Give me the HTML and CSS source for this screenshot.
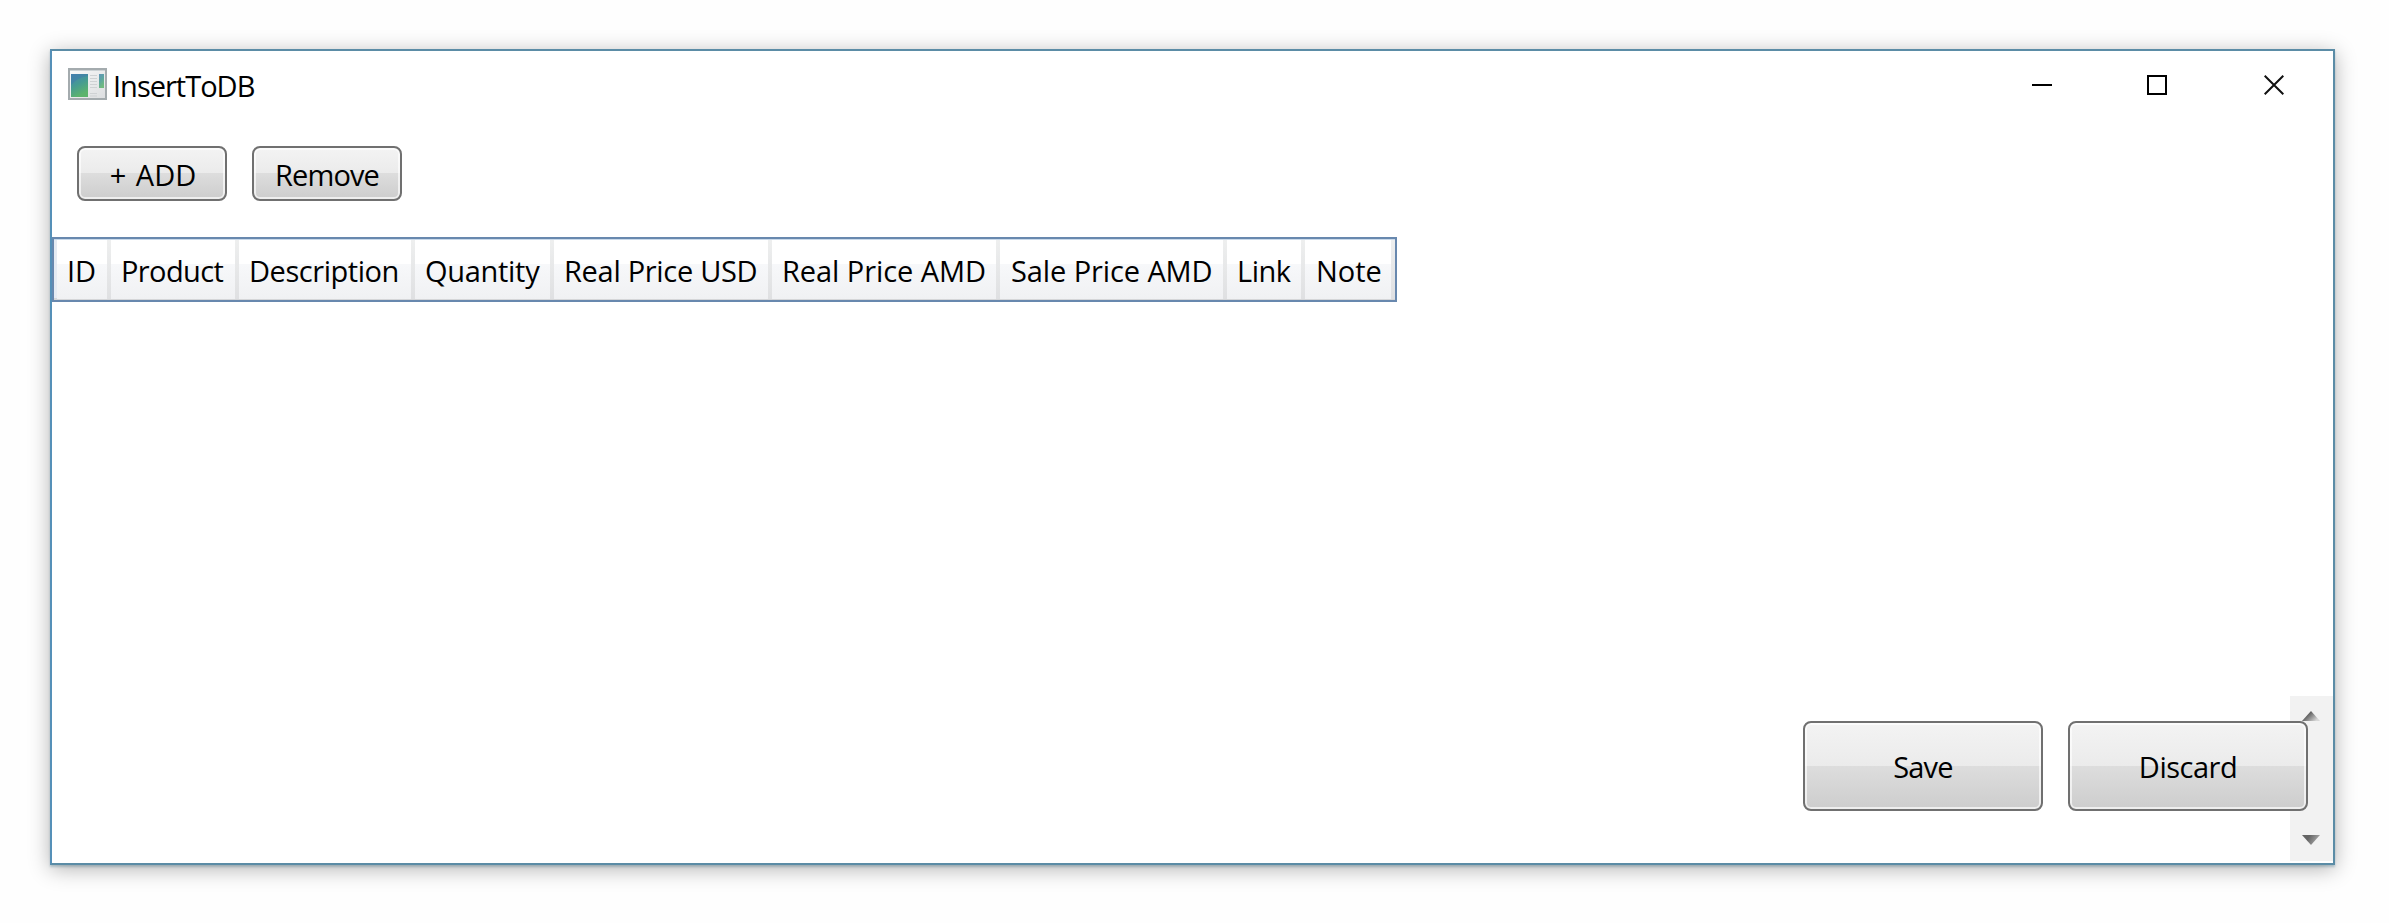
FILE: index.html
```html
<!DOCTYPE html>
<html lang="en">
<head>
<meta charset="utf-8">
<title>InsertToDB</title>
<link rel="stylesheet" href="styles.css">
</head>
<body>
<main class="window">
  <header class="titlebar">
    <svg class="app-icon" width="39" height="32" viewBox="0 0 39 32">
      <defs>
        <linearGradient id="pane" x1="0" y1="0" x2="0.4" y2="1"><stop offset="0" stop-color="#4a86b0"/><stop offset=".5" stop-color="#459a94"/><stop offset="1" stop-color="#5cb46c"/></linearGradient>
        <linearGradient id="frame" x1="0" y1="0" x2="1" y2="1"><stop offset="0" stop-color="#fafafa"/><stop offset="1" stop-color="#dcdee0"/></linearGradient>
      </defs>
      <rect x="1" y="1" width="37" height="30" fill="url(#frame)" stroke="#a4abae" stroke-width="2"/>
      <path d="M2 2.5H37" stroke="#ccd2d5"/>
      <rect x="3" y="6" width="17" height="23" fill="url(#pane)"/>
      <path d="M3 17Q10 9 20 8V6H3Z" fill="#3f78ae" opacity=".45"/>
      <path d="M22 7.500H29M22 10.500H29M22 13.500H29M22 16.500H29M22 19.500H29M22 25.500H29M22 28H29" stroke="#cfd2d4"/>
      <rect x="31" y="6" width="5" height="14" fill="url(#pane)" opacity=".85"/>
    </svg>
    <h1 class="title">InsertToDB</h1>
    <div class="controls">
      <svg width="20" height="20" viewBox="0 0 20 20"><path d="M0 10H20" stroke="#000" stroke-width="2"/></svg>
      <svg width="20" height="20" viewBox="0 0 20 20"><rect x="1" y="1" width="18" height="18" fill="none" stroke="#000" stroke-width="2"/></svg>
      <svg class="close" width="20" height="20" viewBox="0 0 20 20"><path d="M.7.700 19.300 19.300M19.300.700.700 19.300" stroke="#111" stroke-width="2"/></svg>
    </div>
  </header>
  <nav class="toolbar">
    <button class="btn small"><span class="t-add">+ ADD</span></button>
    <button class="btn small"><span class="t-remove">Remove</span></button>
  </nav>
  <div class="grid-head">
    <div class="col c-id">ID</div>
    <div class="col c-product">Product</div>
    <div class="col c-description">Description</div>
    <div class="col c-quantity">Quantity</div>
    <div class="col c-usd">Real Price USD</div>
    <div class="col c-amd">Real Price AMD</div>
    <div class="col c-sale">Sale Price AMD</div>
    <div class="col c-link">Link</div>
    <div class="col c-note">Note</div>
  </div>
  <footer class="footer">
    <div class="scrollbar">
      <svg width="18" height="10" viewBox="0 0 18 10"><defs><linearGradient id="up" x1="0" y1="0" x2="1" y2=".6"><stop offset=".4" stop-color="#606060"/><stop offset="1" stop-color="#d8d8d8"/></linearGradient></defs><path d="M9 0 18 10H0Z" fill="url(#up)"/></svg>
      <svg width="18" height="10" viewBox="0 0 18 10"><defs><linearGradient id="down" x1="0" y1="0" x2="1" y2=".3"><stop offset=".4" stop-color="#646464"/><stop offset="1" stop-color="#aaa"/></linearGradient></defs><path d="M0 0H18L9 10Z" fill="url(#down)"/></svg>
    </div>
    <div class="actions">
      <button class="btn large"><span class="t-save">Save</span></button>
      <button class="btn large"><span class="t-discard">Discard</span></button>
    </div>
  </footer>
</main>
</body>
</html>
```
FILE: styles.css
```css
* { box-sizing: border-box; }
body {
  margin: 0;
  height: 923px;
  padding: 49px 54px 58px 50px;
  background: #fefefe;
  font-family: "Open Sans", "Noto Sans", sans-serif;
  font-size: 29px;
  color: #000;
  overflow: hidden;
}
.window {
  width: 2285px;
  height: 816px;
  border: 2px solid #5b8ca6;
  border-left-color: #5590b8;
  background: #fff;
  box-shadow: 0 4px 20px rgba(0, 0, 0, .3), 0 2px 2px rgba(90, 140, 160, .35);
  display: flex;
  flex-direction: column;
}
.titlebar {
  height: 70px;
  flex: none;
  display: flex;
  align-items: flex-start;
  padding: 17px 49px 0 16px;
}
.app-icon { flex: none; }
.title {
  margin: 0 auto 0 6px;
  padding-top: 3px;
  font-size: 29px;
  font-weight: 400;
  line-height: 30px;
  letter-spacing: -1px;
  white-space: nowrap;
}
.controls { display: flex; gap: 95px; padding-top: 7px; }
.close { margin-left: 2px; }
.toolbar {
  display: flex;
  gap: 25px;
  padding: 25px 25px 0;
  height: 116px;
  flex: none;
}
.btn {
  font: inherit;
  color: #000;
  padding: 0;
  border: 2px solid #707070;
  border-radius: 8px;
  background: linear-gradient(#f3f3f3, #ebebeb 50%, #dddddd 50%, #cdcdcd);
  box-shadow: inset 0 0 0 2px rgba(255, 255, 255, .65);
  display: flex;
  align-items: center;
  justify-content: center;
  white-space: nowrap;
}
.small { width: 150px; height: 55px; line-height: 40px; padding-top: 3px; }
.large { width: 240px; height: 90px; line-height: 40px; padding-top: 2px; }
.t-add { word-spacing: 2px; padding-left: 2px; }
.t-remove { letter-spacing: -.9px; }
.t-save { letter-spacing: -.8px; }
.t-discard { letter-spacing: -.5px; }
.grid-head {
  width: 1345px;
  height: 65px;
  flex: none;
  border: 2px solid #6888ae;
  padding-left: 3px;
  background: #e5ebf3;
  box-shadow: inset 0 1px #c9d9ea, inset 0 -2px #d5d6d8;
  padding-top: 1px;
  padding-bottom: 3px;
  display: flex;
}
.col {
  flex: none;
  height: 59px;
  background: linear-gradient(#eeefef, #dfe0e2) right / 4px 100% no-repeat, linear-gradient(#fff 41%, #f7f8fa 41%, #f0f1f3);
  line-height: 62px;
  padding-left: 10px;
  white-space: nowrap;
}
.c-id { width: 54px; }
.c-product { width: 128px; letter-spacing: -.6px; }
.c-description { width: 176px; letter-spacing: -.45px; }
.c-quantity { width: 139px; letter-spacing: -.3px; }
.c-usd { width: 218px; letter-spacing: -.3px; }
.c-amd { width: 228px; letter-spacing: -.07px; }
.c-sale { width: 227px; letter-spacing: -.1px; padding-left: 11px; }
.c-link { width: 78px; letter-spacing: -.5px; }
.c-note { width: 90px; padding-left: 11px; }
.footer {
  margin-top: auto;
  height: 167px;
  display: flex;
  justify-content: flex-end;
  position: relative;
}
.scrollbar {
  width: 43px;
  height: 165px;
  background: #f2f2f2;
  display: flex;
  flex-direction: column;
  justify-content: space-between;
  align-items: center;
  padding: 15px 2px 16px 0;
}
.actions {
  position: absolute;
  right: 25px;
  top: 25px;
  display: flex;
  gap: 25px;
}
```
